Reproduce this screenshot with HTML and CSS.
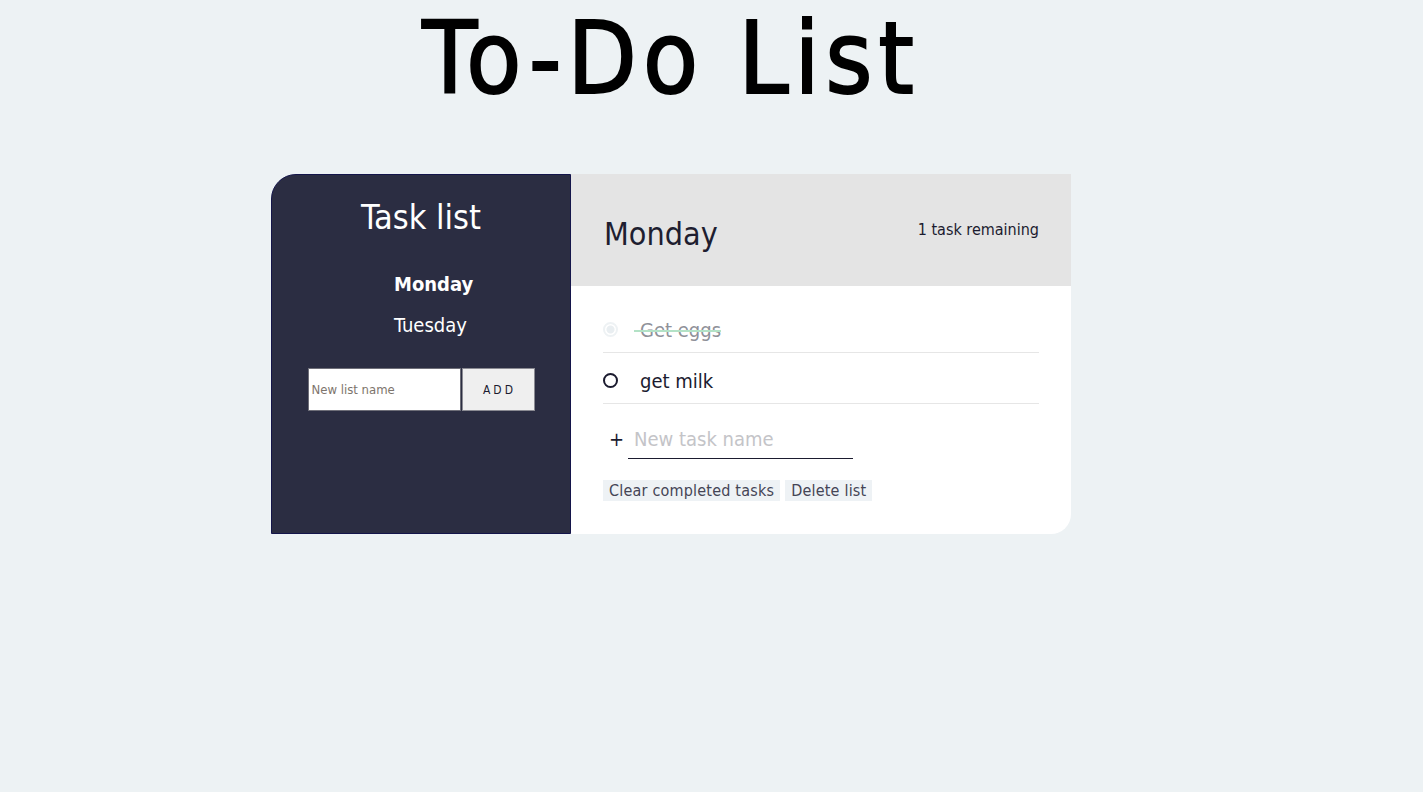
FILE: index.html
```html
<!DOCTYPE html>
<html lang="en">
<head>
<meta charset="utf-8">
<title>To-Do List</title>
<link rel="stylesheet" href="styles.css">
</head>
<body>
<main class="app">
  <h1 class="title">To-Do List</h1>
  <section class="card">
    <aside class="sidebar">
      <h2 class="sidebar-title">Task list</h2>
      <ul class="lists">
        <li class="list-name active">Monday</li>
        <li class="list-name">Tuesday</li>
      </ul>
      <form class="new-list">
        <input class="new-list-input" type="text" placeholder="New list name">
        <button class="new-list-btn" type="button">ADD</button>
      </form>
    </aside>
    <div class="todo">
      <header class="todo-header">
        <h2 class="todo-title">Monday</h2>
        <p class="todo-count">1 task remaining</p>
      </header>
      <div class="todo-body">
        <div class="task done">
          <span class="check"></span>
          <span class="task-label">Get eggs</span>
        </div>
        <div class="task">
          <span class="check"></span>
          <span class="task-label">get milk</span>
        </div>
        <form class="new-task">
          <span class="plus">+</span>
          <input class="new-task-input" type="text" placeholder="New task name">
        </form>
        <div class="actions">
          <button class="action-btn" type="button">Clear completed tasks</button>
          <button class="action-btn" type="button">Delete list</button>
        </div>
      </div>
    </div>
  </section>
</main>
</body>
</html>
```
FILE: styles.css
```css
* { box-sizing: border-box; }

body {
  margin: 0;
  background: #edf2f4;
  font-family: "DejaVu Sans Condensed", "DejaVu Sans", sans-serif;
  color: #1b1b2f;
}

.app {
  width: 800px;
  margin-left: 271px;
}

.title {
  margin: 0;
  font-size: 100px;
  line-height: 117px;
  font-weight: 400;
  letter-spacing: 6px;
  -webkit-text-stroke: 2px #000;
  text-align: center;
  color: #000;
}

.card {
  margin-top: 57px;
  display: grid;
  grid-template-columns: 300px 500px;
}

.sidebar {
  background: #2b2d42;
  border: 1px solid #14154a;
  border-top-left-radius: 25px;
  color: #fff;
  padding-top: 25px;
}

.sidebar-title {
  margin: 0;
  font-size: 34px;
  line-height: 1;
  font-weight: 400;
  text-align: center;
}

.lists {
  list-style: none;
  margin: 30px 0 0;
  padding-left: 122px;
}

.list-name {
  font-size: 20px;
  line-height: 41px;
}

.list-name.active { font-weight: 700; }

.new-list {
  display: flex;
  justify-content: center;
  gap: 1px;
  margin-top: 22px;
}

.new-list-input {
  width: 153px;
  height: 43px;
  border: 1px solid #6e6e78;
  background: #fff;
  padding: 0 3px;
  font-family: inherit;
  font-size: 13px;
  outline: none;
}

.new-list-input::placeholder { color: #7d746c; }

.new-list-btn {
  width: 73px;
  height: 43px;
  border: 1px solid #8a8a92;
  background: #efefef;
  font-family: inherit;
  font-size: 12px;
  letter-spacing: 3px;
  color: #1b1b2f;
  padding: 0 0 0 3px;
}

.todo {
  display: flex;
  flex-direction: column;
}

.todo-header {
  height: 112px;
  background: #e4e4e4;
  display: flex;
  justify-content: space-between;
  align-items: center;
  padding: 0 32px 0 33px;
}

.todo-title {
  margin: 8px 0 0;
  font-size: 32px;
  line-height: 32px;
  font-weight: 400;
  color: #1e1e30;
}

.todo-count {
  margin: 0;
  font-size: 16px;
  line-height: 1;
  color: #1b1b2f;
}

.todo-body {
  flex: 1;
  background: #fff;
  border-bottom-right-radius: 20px;
  padding: 16px 32px 33px;
}

.task {
  height: 51px;
  padding-top: 5px;
  border-bottom: 1px solid #e6e6e6;
  display: flex;
  align-items: center;
}

.check {
  width: 15px;
  height: 15px;
  border-radius: 50%;
  border: 2px solid #1b1b2f;
  flex: none;
}

.task.done .check {
  border-color: #eef2f4;
  background: radial-gradient(circle, #e9eef1 0 3.5px, #fff 4.5px);
}

.task-label {
  position: relative;
  margin-left: 22px;
  font-size: 20px;
  line-height: 1;
  color: #1b1b2f;
}

.task.done .task-label { color: #8f9199; }

.task.done .task-label::after {
  content: "";
  position: absolute;
  left: -6px;
  right: 0;
  top: 50%;
  height: 2px;
  background: #b3e2c6;
}

.new-task {
  display: flex;
  align-items: center;
  margin-top: 20px;
}

.plus {
  width: 19px;
  margin-left: 6px;
  margin-top: -5px;
  font-size: 20px;
  line-height: 1;
  color: #1b1b2f;
}

.new-task-input {
  width: 225px;
  height: 35px;
  border: none;
  border-bottom: 1px solid #1b1b2f;
  background: transparent;
  padding: 0 6px 4px;
  font-family: inherit;
  font-size: 20px;
  outline: none;
}

.new-task-input::placeholder { color: #c4c4c8; }

.actions {
  display: flex;
  gap: 5px;
  margin-top: 21px;
}

.action-btn {
  height: 21px;
  border: none;
  background: #eef2f5;
  padding: 0 6px;
  font-family: inherit;
  font-size: 16px;
  line-height: 21px;
  letter-spacing: 0.2px;
  color: #454555;
}
```
